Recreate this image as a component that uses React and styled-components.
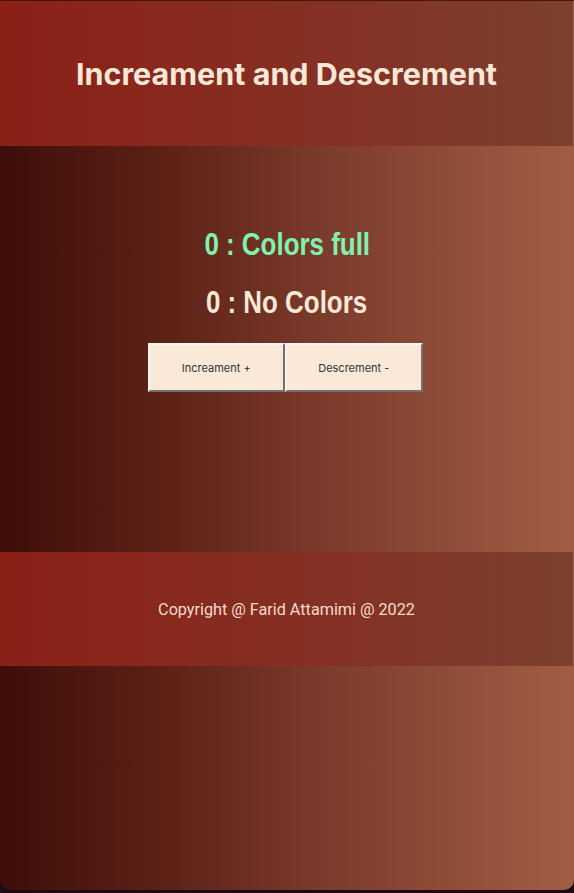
import React, { useState } from "react";
import styled, { createGlobalStyle } from "styled-components";

const GlobalStyle = createGlobalStyle`
  html, body {
    margin: 0;
    padding: 0;
    background: #1c0a16;
  }
  #root {
    min-height: 893px;
  }
`;

const Window = styled.div`
  height: 889px;
  border-top: 1px solid #4a1509;
  border-radius: 0 0 10px 10px;
  overflow: hidden;
  background: linear-gradient(to right, #3e0e0a 0%, #5e2217 30%, #7a3a2b 55%, #a35d45 100%);
  display: flex;
  flex-direction: column;
`;

const Band = styled.div`
  height: ${(props) => props.h}px;
  margin-right: 1px;
  background: linear-gradient(to right, #8b2017, #853024 55%, #7c402f);
  display: flex;
  align-items: center;
  justify-content: center;
`;

const Title = styled.h1`
  margin: 0;
  font-family: Inter, "Liberation Sans", sans-serif;
  font-weight: 700;
  font-size: 30.5px;
  color: #fbe8d6;
`;

const Main = styled.main`
  height: 406px;
  padding-top: 80px;
  box-sizing: border-box;
  display: flex;
  flex-direction: column;
  align-items: center;
`;

const Count = styled.h2`
  margin: 0 0 ${(props) => props.gap}px;
  font-family: "Liberation Sans", Arial, sans-serif;
  font-weight: 700;
  font-size: 32px;
  line-height: 37px;
  transform: scaleX(0.81);
  color: ${(props) => props.color};
`;

const Buttons = styled.div`
  display: flex;
  margin-right: 4px;
`;

const Button = styled.button`
  width: 137.5px;
  height: 49px;
  background: #fae9d8;
  border: 2px solid;
  border-color: #f4f4f4 #707070 #707070 #f4f4f4;
  font-family: Inter, "Liberation Sans", sans-serif;
  font-size: 11px;
  color: #333;
  cursor: pointer;
`;

const Copy = styled.p`
  margin: 0;
  font-family: Roboto, "Liberation Sans", sans-serif;
  font-size: 16.2px;
  color: #f6dccb;
`;

export default function App() {
  const [count, setCount] = useState(0);

  return (
    <>
      <GlobalStyle />
      <Window>
        <Band h={145}>
          <Title>Increament and Descrement</Title>
        </Band>
        <Main>
          <Count color="#7ff2b0" gap={21}>{count} : Colors full</Count>
          <Count color="#fbe8d6" gap={22}>{count} : No Colors</Count>
          <Buttons>
            <Button onClick={() => setCount(count + 1)}>Increament +</Button>
            <Button onClick={() => setCount(count - 1)}>Descrement -</Button>
          </Buttons>
        </Main>
        <Band h={114}>
          <Copy>Copyright @ Farid Attamimi @ 2022</Copy>
        </Band>
      </Window>
    </>
  );
}
